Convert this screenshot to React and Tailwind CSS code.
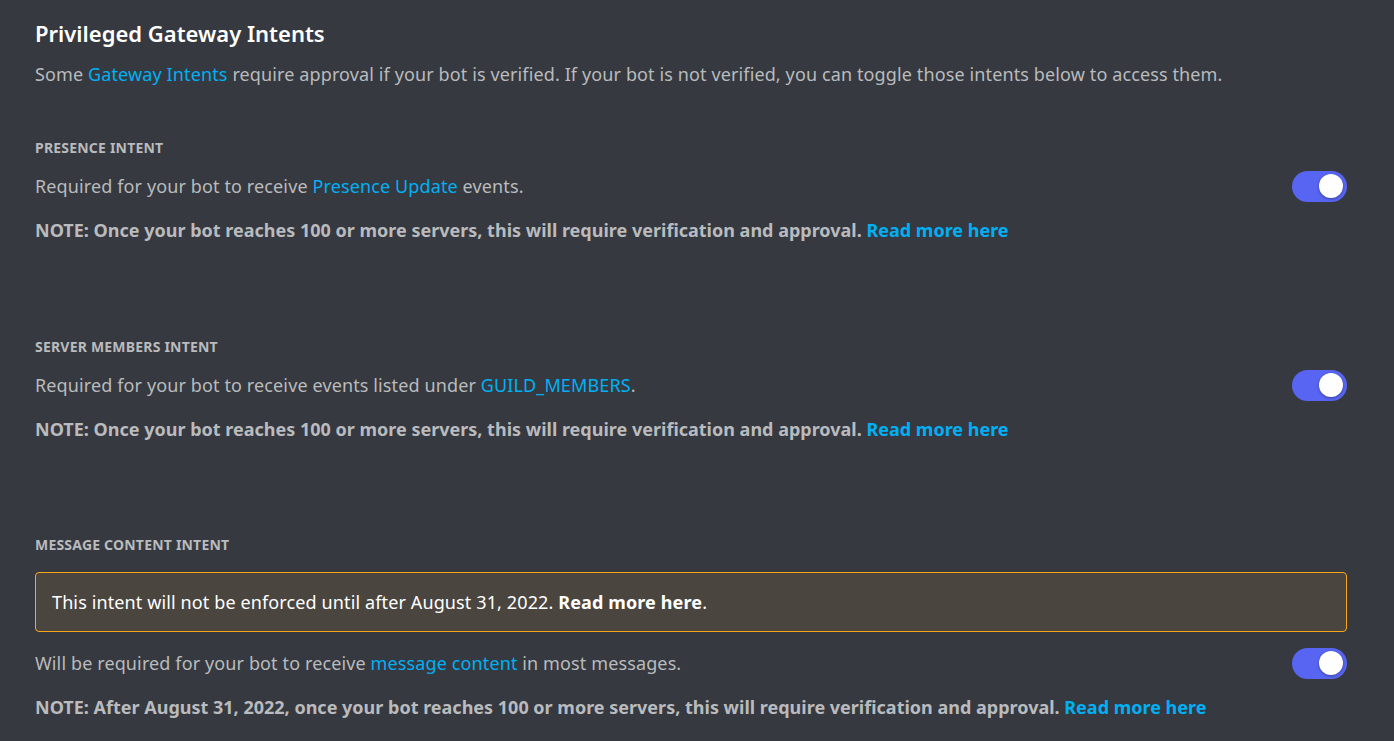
import React from 'react';

const Link = ({ children, bold }) => (
  <a className={bold ? 'text-[#00b0f4] font-bold' : 'text-[#00b0f4]'} href="#">
    {children}
  </a>
);

// toggle is taller than the text line; negative margin keeps the row at line height
const Toggle = () => (
  <div className="-my-[4px] w-[55px] h-[31px] rounded-full bg-[#5865f2] flex items-center justify-end pr-[4px] shrink-0">
    <div className="w-[24px] h-[24px] rounded-full bg-white shadow-[0_1px_3px_rgba(0,0,0,0.35)]" />
  </div>
);

const IntentRow = ({ children, note }) => (
  <div>
    <div className="flex items-center justify-between mt-[16px]">
      <p className="text-[18px] leading-[24px] tracking-[0.12px] text-[#b9bbbe]">{children}</p>
      <Toggle />
    </div>
    <p className="mt-[20px] text-[18px] leading-[24px] font-bold text-[#b9bbbe]">
      {note} <Link bold>Read more here</Link>
    </p>
  </div>
);

const Heading = ({ children, className }) => (
  <h3 className={`text-[14px] leading-[20px] font-bold uppercase tracking-[0.2px] text-[#b9bbbe] ${className}`}>{children}</h3>
);

export default function App() {
  const note = 'NOTE: Once your bot reaches 100 or more servers, this will require verification and approval.';
  return (
    <div className="min-h-screen bg-[#36393f] pl-[35px] pr-[47px] pt-[18px] pb-[30px] font-['Noto_Sans',sans-serif]">
      <h2 className="text-[22px] leading-[30px] font-semibold text-white">Privileged Gateway Intents</h2>
      <p className="mt-[14px] text-[18px] leading-[24px] tracking-[0.12px] text-[#b9bbbe]">
        Some <Link>Gateway Intents</Link> require approval if your bot is verified. If your bot is not verified, you can toggle those intents below to access them.
      </p>

      <Heading className="mt-[52px]">Presence Intent</Heading>
      <IntentRow note={note}>
        Required for your bot to receive <Link>Presence Update</Link> events.
      </IntentRow>

      <Heading className="mt-[95px]">Server Members Intent</Heading>
      <IntentRow note={note}>
        Required for your bot to receive events listed under <Link>GUILD_MEMBERS</Link>.
      </IntentRow>

      <Heading className="mt-[94px]">Message Content Intent</Heading>
      <div className="mt-[17px] h-[60px] rounded-[4px] border border-[#faa61a] bg-[#4a453f] flex items-center px-[16px]">
        <p className="text-[18px] leading-[24px] tracking-[0.12px] text-white">
          This intent will not be enforced until after August 31, 2022. <span className="font-bold">Read more here</span>.
        </p>
      </div>
      <div className="flex items-center justify-between mt-[19px]">
        <p className="text-[18px] leading-[24px] tracking-[0.12px] text-[#b9bbbe]">
          Will be required for your bot to receive <Link>message content</Link> in most messages.
        </p>
        <Toggle />
      </div>
      <p className="mt-[20px] text-[18px] leading-[24px] font-bold text-[#b9bbbe]">
        NOTE: After August 31, 2022, once your bot reaches 100 or more servers, this will require verification and approval. <Link bold>Read more here</Link>
      </p>
    </div>
  );
}
